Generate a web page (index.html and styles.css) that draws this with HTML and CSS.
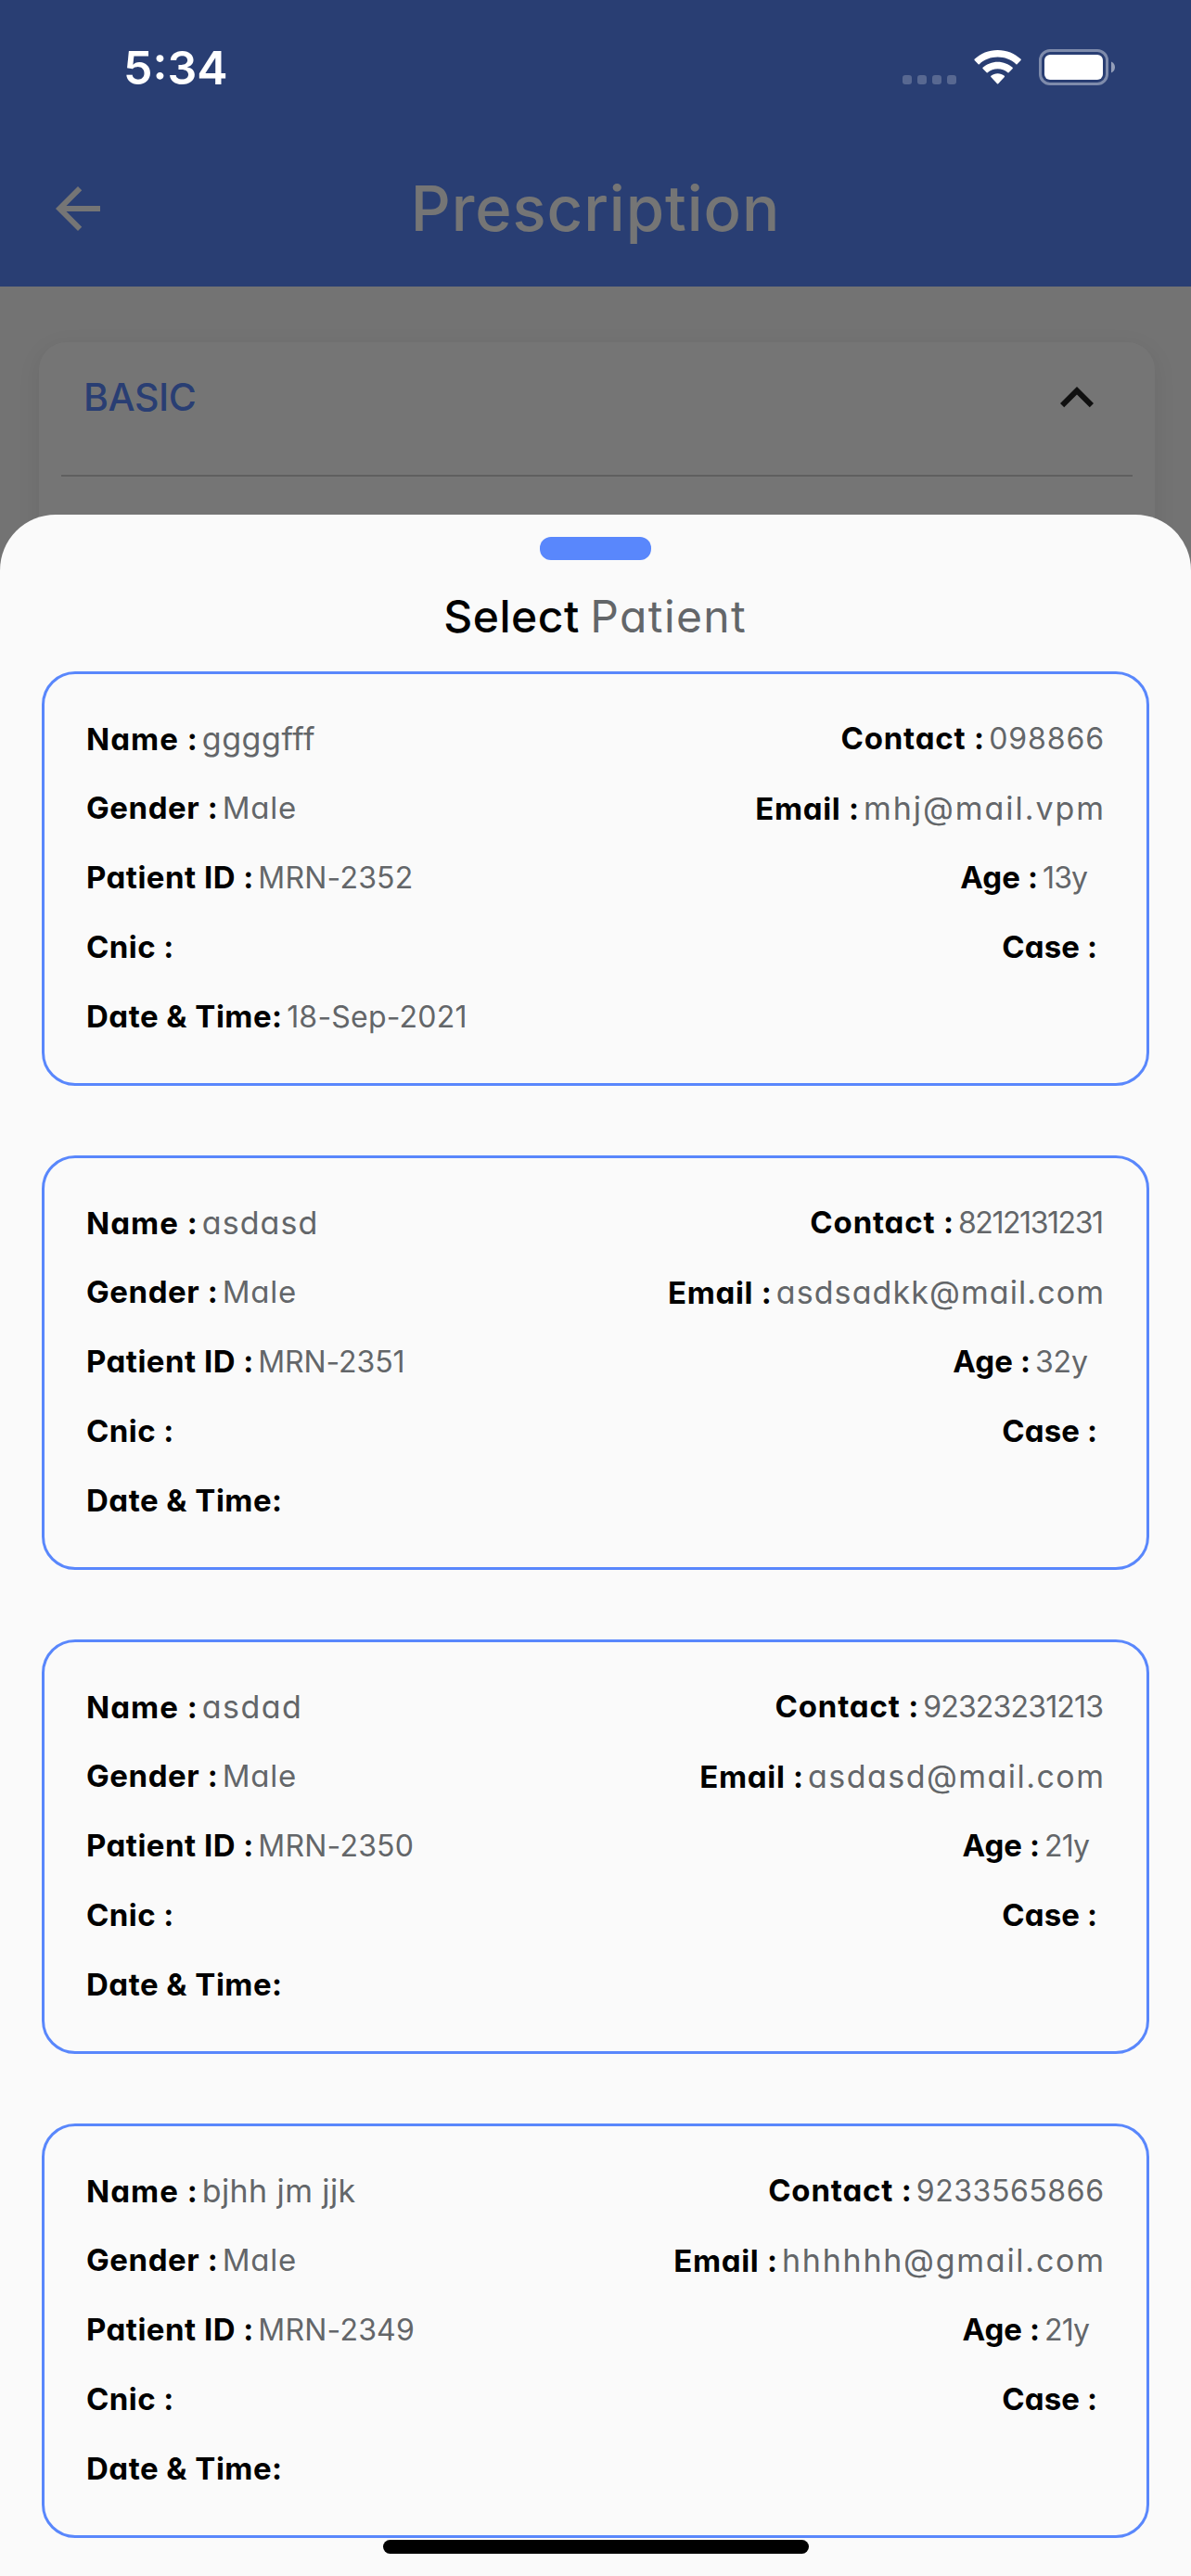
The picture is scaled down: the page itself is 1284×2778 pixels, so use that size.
FILE: index.html
```html
<!DOCTYPE html>
<html lang="en">
<head>
<meta charset="utf-8">
<meta name="viewport" content="width=device-width, initial-scale=1">
<title>Prescription</title>
<link rel="stylesheet" href="styles.css">
</head>
<body>
<div class="screen">
  <div class="page">
    <header class="app-bar">
      <svg class="back" viewBox="0 0 24 24" aria-label="Back"><path d="M20 11H7.83l5.59-5.59L12 4l-8 8 8 8 1.41-1.41L7.83 13H20v-2z"/></svg>
      <h1 class="app-title">Prescription</h1>
    </header>
    <section class="panel">
      <div class="panel-head">
        <span class="panel-title">BASIC</span>
        <svg class="chevron" viewBox="0 0 24 24" aria-label="Collapse"><path d="M12 8l-6 6 1.41 1.41L12 10.83l4.59 4.58L18 14z"/></svg>
      </div>
      <hr class="panel-rule">
    </section>
  </div>
  <div class="scrim"></div>

  <div class="status-bar">
    <span class="time">5:34</span>
    <svg class="status-icons" viewBox="973 53 230 39" aria-hidden="true">
      <g fill="#fff" fill-opacity=".22">
        <rect x="973" y="81" width="10" height="10" rx="3"/>
        <rect x="989" y="81" width="10" height="10" rx="3"/>
        <rect x="1005" y="81" width="10" height="10" rx="3"/>
        <rect x="1021" y="81" width="10" height="10" rx="3"/>
      </g>
      <g fill="#fff">
        <path d="M1075.6 54C1066 54 1057 57.700 1050.600 63.800Q1050.100 64.300 1050.600 64.900L1054.700 69.200Q1055.200 69.700 1055.800 69.200C1061.200 64.300 1068.200 61.600 1075.600 61.600C1083 61.600 1090 64.300 1095.400 69.200Q1096 69.700 1096.500 69.200L1100.600 64.900Q1101.100 64.300 1100.600 63.800C1094.200 57.700 1085.200 54 1075.600 54Z"/>
        <path d="M1075.6 66.700C1069.500 66.700 1063.900 69 1059.600 72.800Q1059 73.300 1059.500 73.900L1063.700 78.200Q1064.200 78.600 1064.700 78.200C1067.700 75.700 1071.500 74.200 1075.600 74.200C1079.700 74.200 1083.500 75.700 1086.500 78.200Q1087 78.600 1087.500 78.200L1091.700 73.900Q1092.200 73.300 1091.600 72.800C1087.300 69 1081.700 66.700 1075.600 66.700Z"/>
        <path d="M1075.600 79.300C1072.900 79.300 1070.400 80.200 1068.400 81.800Q1067.800 82.300 1068.300 82.900L1075 90.300Q1075.600 90.900 1076.200 90.300L1082.900 82.900Q1083.400 82.300 1082.800 81.800C1080.800 80.200 1078.300 79.300 1075.600 79.300Z"/>
        <rect x="1126" y="59" width="63" height="27" rx="6"/>
      </g>
      <rect x="1121.500" y="54.500" width="72" height="36" rx="10.500" fill="none" stroke="#fff" stroke-opacity=".4" stroke-width="3"/>
      <path d="M1198 66.500c2.400.9 4 3.300 4 6s-1.600 5.100-4 6z" fill="#fff" fill-opacity=".5"/>
    </svg>
  </div>

  <main class="sheet">
    <div class="handle"></div>
    <h2 class="sheet-title"><span class="select">Select</span><span class="patient">Patient</span></h2>
    <div class="list">
      <article class="card">
        <div class="row"><div class="field"><b class="name">Name :</b><span class="word t56">ggggfff</span></div><div class="field"><b class="contact">Contact :</b><span class="t91">098866</span></div></div>
        <div class="row"><div class="field"><b class="gender">Gender :</b><span class="male">Male</span></div><div class="field"><b class="email">Email :</b><span class="word t195">mhj@mail.vpm</span></div></div>
        <div class="row"><div class="field"><b class="patient-id">Patient ID :</b><span class="t22">MRN-2352</span></div><div class="field years"><b class="age">Age :</b><span class="t-89">13y</span></div></div>
        <div class="row"><div class="field"><b class="cnic">Cnic :</b></div><div class="field no-case"><b class="case">Case :</b></div></div>
        <div class="row"><div class="field"><b class="date">Date &amp; Time:</b><span class="t22">18-Sep-2021</span></div></div>
      </article>
      <article class="card">
        <div class="row"><div class="field"><b class="name">Name :</b><span class="word t109">asdasd</span></div><div class="field"><b class="contact">Contact :</b><span class="t-144">8212131231</span></div></div>
        <div class="row"><div class="field"><b class="gender">Gender :</b><span class="male">Male</span></div><div class="field"><b class="email">Email :</b><span class="word t109">asdsadkk@mail.com</span></div></div>
        <div class="row"><div class="field"><b class="patient-id">Patient ID :</b><span class="t-10">MRN-2351</span></div><div class="field years"><b class="age">Age :</b><span class="t-10">32y</span></div></div>
        <div class="row"><div class="field"><b class="cnic">Cnic :</b></div><div class="field no-case"><b class="case">Case :</b></div></div>
        <div class="row"><div class="field"><b class="date">Date &amp; Time:</b></div></div>
      </article>
      <article class="card">
        <div class="row"><div class="field"><b class="name">Name :</b><span class="word t146">asdad</span></div><div class="field"><b class="contact">Contact :</b><span class="t-82">92323231213</span></div></div>
        <div class="row"><div class="field"><b class="gender">Gender :</b><span class="male">Male</span></div><div class="field"><b class="email">Email :</b><span class="word t146">asdasd@mail.com</span></div></div>
        <div class="row"><div class="field"><b class="patient-id">Patient ID :</b><span class="t22">MRN-2350</span></div><div class="field years teens"><b class="age">Age :</b><span class="t-89">21y</span></div></div>
        <div class="row"><div class="field"><b class="cnic">Cnic :</b></div><div class="field no-case"><b class="case">Case :</b></div></div>
        <div class="row"><div class="field"><b class="date">Date &amp; Time:</b></div></div>
      </article>
      <article class="card">
        <div class="row"><div class="field"><b class="name">Name :</b><span class="word t40">bjhh jm jjk</span></div><div class="field"><b class="contact">Contact :</b><span class="t56">9233565866</span></div></div>
        <div class="row"><div class="field"><b class="gender">Gender :</b><span class="male">Male</span></div><div class="field"><b class="email">Email :</b><span class="word t175">hhhhhh@gmail.com</span></div></div>
        <div class="row"><div class="field"><b class="patient-id">Patient ID :</b><span class="t22">MRN-2349</span></div><div class="field years teens"><b class="age">Age :</b><span class="t-89">21y</span></div></div>
        <div class="row"><div class="field"><b class="cnic">Cnic :</b></div><div class="field no-case"><b class="case">Case :</b></div></div>
        <div class="row"><div class="field"><b class="date">Date &amp; Time:</b></div></div>
      </article>
    </div>
  </main>
  <div class="home-indicator"></div>
</div>
</body>
</html>
```
FILE: styles.css
```css
* { box-sizing: border-box; }

body {
  margin: 0;
  background: #fafafa;
  font-family: Inter, "Open Sans", sans-serif;
  font-feature-settings: "cv11";
}

.screen {
  position: relative;
  width: 1284px;
  height: 2778px;
  overflow: hidden;
}

/* Page under the sheet */
.page { height: 100%; background: #fafafa; }

.app-bar {
  display: grid;
  grid-template-columns: 120px 1fr 120px;
  align-items: center;
  height: 309px;
  padding: 141px 0 0;
  background: #5987fa;
}

.back { width: 72px; height: 72px; margin-left: 48px; fill: #fff; }

.app-title {
  justify-self: center;
  margin: 0;
  font-size: 67px;
  font-weight: 500;
  line-height: 168px;
  letter-spacing: .94px;
  color: #fff;
  white-space: nowrap;
}

.panel {
  height: 800px;
  margin: 60px 39px 0 42px;
  border-radius: 30px;
  background: #fff;
  box-shadow: 0 6px 24px rgba(0, 0, 0, .08);
}

.panel-head {
  display: flex;
  justify-content: space-between;
  height: 118px;
  padding: 0 48px;
}

.panel-title {
  font-size: 41px;
  font-weight: 500;
  line-height: 118px;
  letter-spacing: -.45px;
  color: #5987fa;
}

.chevron { width: 72px; height: 72px; margin-top: 24px; fill: #232323; }

.panel-rule {
  height: 2px;
  margin: 25px 24px 0;
  border: 0;
  background: #d0d0d0;
}

.scrim {
  position: absolute;
  inset: 0;
  background: rgba(0, 0, 0, .54);
}

/* System status bar */
.status-bar {
  position: absolute;
  inset: 0 0 auto;
  display: flex;
  justify-content: space-between;
  height: 141px;
  padding: 0 81px 0 133px;
  color: #fff;
}

.time { margin-top: 23px; font-size: 50px; font-weight: 600; line-height: 100px; }
.status-icons { width: 230px; height: 39px; margin-top: 53px; }

/* Bottom sheet */
.sheet {
  position: absolute;
  inset: 555.4px 0 0;
  display: flex;
  flex-direction: column;
  align-items: center;
  padding-top: 24px;
  border-radius: 60px 60px 0 0;
  background: #fafafa;
}

.handle { flex: none; width: 120px; height: 24.6px; border-radius: 12px; background: #5987fc; }

.sheet-title {
  display: flex;
  gap: 12px;
  margin: 26px 2px 24px 0;
  font-size: 48px;
  line-height: 70px;
}

.select { --track: .49px; font-weight: 500; color: #000; }
.patient { --track: 1.37px; font-weight: 400; color: #636669; }

.list {
  display: flex;
  flex-direction: column;
  gap: 75px;
  align-self: stretch;
  padding: 0 45px;
}

.card {
  height: 447px;
  padding: 32px 46px 32px 45px;
  border: 3px solid #5987fc;
  border-radius: 36px;
}

.row { display: flex; justify-content: space-between; height: 75px; }

.field {
  display: flex;
  align-items: baseline;
  gap: 5px;
  font-size: 32px;
  line-height: 75px;
  color: #636669;
  white-space: nowrap;
}

.field b { font-size: 33px; font-weight: 700; color: #000; }
.field .word { font-size: 34px; }
.years { margin-right: 17px; }
.years.teens { margin-right: 15px; }
.no-case { margin-right: 7px; }

/* Tracking; the space after the last letter is taken back */
.field b, .field span, .select, .patient {
  letter-spacing: var(--track);
  margin-right: calc(var(--track) * -1);
}

.name { --track: 1.03px; }
.gender { --track: .57px; }
.patient-id { --track: .48px; }
.cnic { --track: .41px; }
.date { --track: .5px; }
.contact { --track: .82px; }
.email { --track: .67px; }
.age { --track: .12px; }
.case { --track: .1px; }
.male { --track: .8px; font-size: 33px; }

.t22 { --track: .22px; }
.t40 { --track: .4px; }
.t56 { --track: .56px; }
.t91 { --track: .91px; }
.t109 { --track: 1.09px; }
.t146 { --track: 1.46px; }
.t175 { --track: 1.75px; }
.t195 { --track: 1.95px; }
.t-10 { --track: -.1px; }
.t-82 { --track: -.82px; }
.t-89 { --track: -.89px; }
.t-144 { --track: -1.44px; }

.home-indicator {
  position: absolute;
  left: 413px;
  bottom: 24px;
  width: 459px;
  height: 15px;
  border-radius: 8px;
  background: #000;
}
```
